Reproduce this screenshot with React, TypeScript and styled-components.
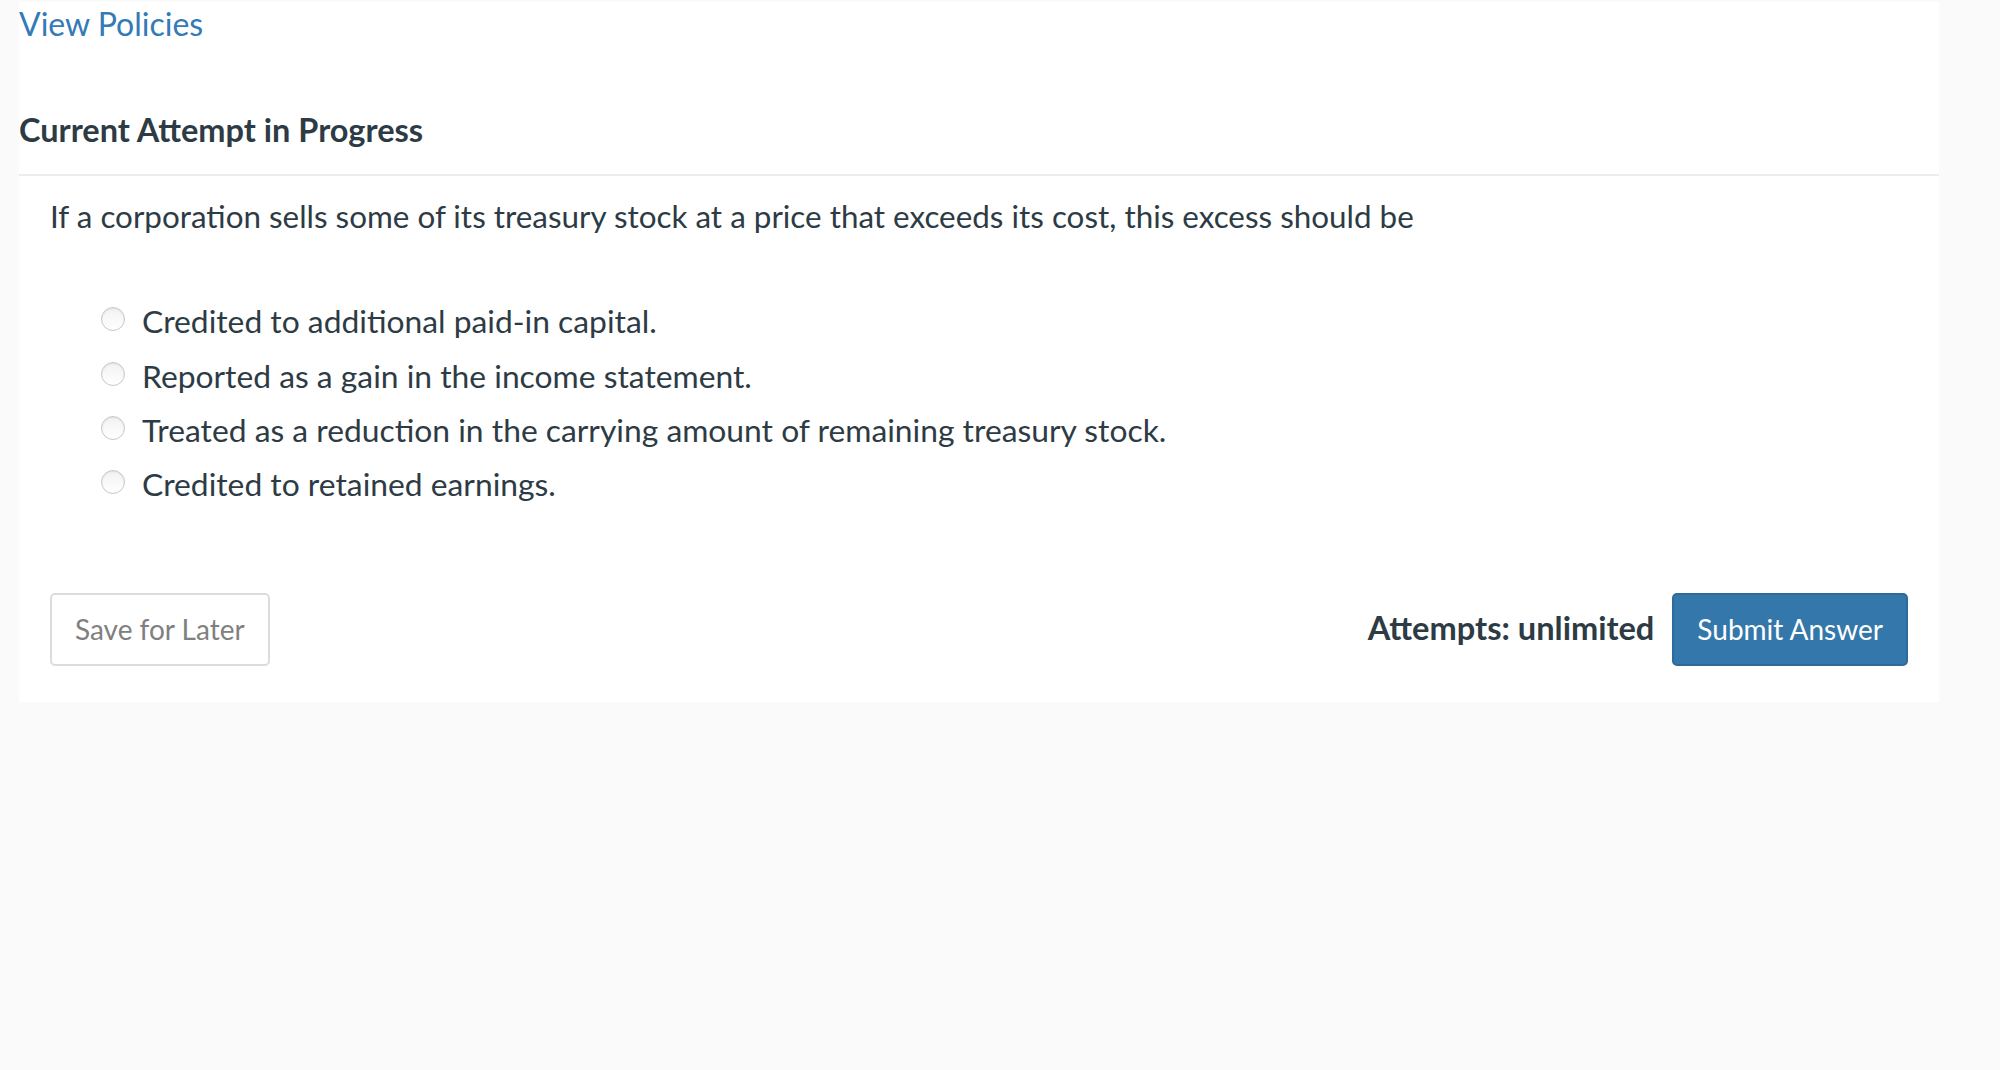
import styled, { createGlobalStyle } from "styled-components";

const GlobalStyle = createGlobalStyle`
  html, body {
    margin: 0;
    padding: 0;
    background: #fafafa;
  }
  body {
    font-family: Lato, "Open Sans", "Liberation Sans", sans-serif;
    color: #2d3b45;
  }
`;

const Page = styled.div`
  min-height: 1070px;
  padding: 2px 0 0 19px;
  box-sizing: border-box;
  background: #fafafa;
`;

const Card = styled.section`
  width: 1920px;
  background: #ffffff;
  padding-bottom: 36px;
`;

const PolicyLink = styled.a`
  display: block;
  font-size: 32px;
  line-height: 44px;
  color: #337ab7;
  text-decoration: none;
  cursor: pointer;
`;

const Heading = styled.h2`
  margin: 64px 0 0;
  font-size: 32.5px;
  line-height: 40px;
  font-weight: 700;
  color: #2d3b45;
  padding-bottom: 24px;
  border-bottom: 2px solid #ececec;
`;

const Body = styled.div`
  padding: 0 31px;
`;

const Question = styled.p`
  margin: 20px 0 0;
  font-size: 31.4px;
  line-height: 40px;
`;

const Options = styled.ul`
  list-style: none;
  margin: 58px 0 0;
  padding: 0 0 0 51px;
`;

const Option = styled.li`
  display: flex;
  align-items: center;
  height: 54.4px;
  font-size: 31.8px;
  cursor: pointer;
`;

const Radio = styled.span`
  width: 22px;
  height: 22px;
  border-radius: 50%;
  border: 1px solid #c8c8c8;
  background: linear-gradient(#f2f2f2, #ffffff);
  box-shadow: inset 0 1px 2px rgba(0, 0, 0, 0.08);
  margin-right: 17px;
  margin-top: -4px;
  flex-shrink: 0;
`;

const Footer = styled.div`
  display: flex;
  align-items: center;
  margin-top: 81px;
`;

const Spacer = styled.div`
  flex: 1;
`;

const Attempts = styled.span`
  font-size: 32.6px;
  font-weight: 700;
  margin-right: 18px;
  margin-top: -4px;
`;

const Button = styled.button<{ $primary?: boolean }>`
  height: 73px;
  padding: 0 23px;
  border-radius: 5px;
  font-family: Lato, "Open Sans", "Liberation Sans", sans-serif;
  font-size: 28px;
  cursor: pointer;
  border: 2px solid ${(p) => (p.$primary ? "#2e6a9c" : "#dcdcdc")};
  background: ${(p) => (p.$primary ? "#3477aa" : "#ffffff")};
  color: ${(p) => (p.$primary ? "#ffffff" : "#808080")};
`;

const options = [
  "Credited to additional paid-in capital.",
  "Reported as a gain in the income statement.",
  "Treated as a reduction in the carrying amount of remaining treasury stock.",
  "Credited to retained earnings.",
];

export default function App() {
  return (
    <>
      <GlobalStyle />
      <Page>
        <Card>
          <PolicyLink>View Policies</PolicyLink>
          <Heading>Current Attempt in Progress</Heading>
          <Body>
            <Question>
              If a corporation sells some of its treasury stock at a price that exceeds its cost, this excess should be
            </Question>
            <Options>
              {options.map((o) => (
                <Option key={o}>
                  <Radio />
                  {o}
                </Option>
              ))}
            </Options>
            <Footer>
              <Button>Save for Later</Button>
              <Spacer />
              <Attempts>Attempts: unlimited</Attempts>
              <Button $primary>Submit Answer</Button>
            </Footer>
          </Body>
        </Card>
      </Page>
    </>
  );
}
